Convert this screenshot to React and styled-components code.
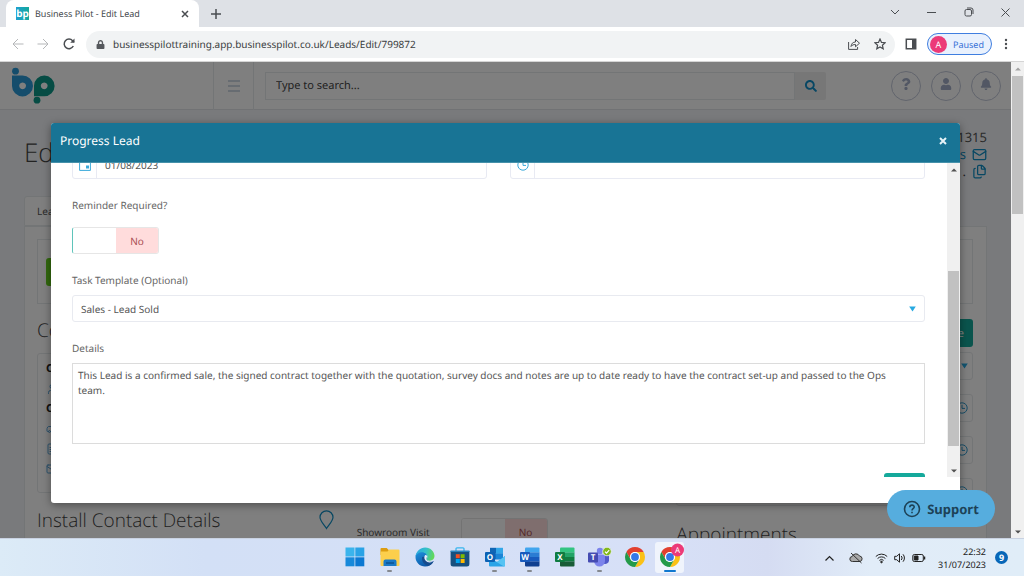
import { useLayoutEffect, useRef, useState } from "react";
import styled, { createGlobalStyle, css } from "styled-components";
import { Files, Mail, User, FileText, Car } from "lucide-react";
import { FaBell, FaLock, FaQuestion, FaSearch, FaUser } from "react-icons/fa";

const GlobalStyle = createGlobalStyle`
  :root {
    --color-teal: #15a99b;
    --color-header: #187495;
    --color-text: #555;
    --color-line: #e7eaec;
    --font-page: "Noto Sans", "Open Sans", sans-serif;
    --font-light: "Open Sans Light", "Open Sans", "Noto Sans", sans-serif;
  }

  * {
    box-sizing: border-box;
    text-rendering: geometricPrecision;
  }

  body {
    margin: 0;
    font-family: var(--font-page);
    font-size: 10px;
    color: var(--color-text);
  }

  button, input, select, textarea {
    font: inherit;
    color: inherit;
  }

  button {
    padding: 0;
    border: none;
    background: none;
  }

  svg {
    display: block;
    flex-shrink: 0;
  }
`;

const Desktop = styled.div`
  display: flex;
  flex-direction: column;
  height: 100vh;
  overflow: hidden;
`;

/* ---------- browser ---------- */

const TabStrip = styled.div`
  display: flex;
  height: 27px;
  padding-left: 6px;
  background-color: #dee1e6;
`;
const Tab = styled.div`
  display: flex;
  align-items: center;
  gap: 6px;
  width: 193px;
  padding: 0 8px 0 10px;
  border-radius: 8px 8px 0 0;
  background-color: #fff;
  font-size: 9px;
  color: #45494d;

  & span {
    flex: 1;
    white-space: nowrap;
  }
`;
const Favicon = styled.b`
  width: 13px;
  height: 13px;
  background: linear-gradient(90deg, #1fa0d0, #14a89c);
  color: #fff;
  font-size: 10px;
  line-height: 12px;
  text-align: center;
`;
const IconButton = styled.button`
  display: grid;
  place-items: center;
  width: ${(props) => props.$width || 25}px;
  height: 27px;
  color: ${(props) => props.$color || "#4a4d51"};
`;
const NewTab = styled(IconButton)`
  margin-left: 4px;
`;
const WindowButtons = styled.div`
  display: flex;
  height: 24px;
  margin-left: auto;

  & button {
    height: 24px;
  }
`;
const Toolbar = styled.div`
  display: flex;
  align-items: center;
  height: 35px;
  padding: 0 5px;
  background-color: #fff;
  border-bottom: 1px solid #d5d5d5;
`;
const AddressBar = styled.div`
  display: flex;
  flex: 1;
  align-items: center;
  height: 27px;
  margin-left: 4px;
  padding: 0 2px 0 10px;
  border-radius: 14px;
  background-color: #f1f3f4;
  color: #55585c;
`;
const Url = styled.input`
  flex: 1;
  min-width: 0;
  padding: 0 0 0 8px;
  border: none;
  outline: none;
  background: none;
  color: #3a3d40;
`;
const Profile = styled.button`
  display: flex;
  align-items: center;
  gap: 6px;
  width: 65px;
  height: 22px;
  padding-left: 2px;
  border: 1px solid #3f7ee0;
  border-radius: 11px;
  background-color: #e9f1fd;
  font-size: 9px;
  color: #3670d6;
`;
const Avatar = styled.span`
  display: grid;
  place-items: center;
  width: 17px;
  height: 17px;
  border-radius: 50%;
  background-color: #ec3a78;
  color: #fff;
`;

const Viewport = styled.div`
  position: relative;
  display: flex;
  flex: 1;
  min-height: 0;
`;

/* ---------- scroll bar ---------- */

const Track = styled.div`
  display: flex;
  flex-direction: column;
  width: 13px;
  padding: 0 1px;
  background-color: #f0f0f0;
`;
const Thumb = styled.div`
  flex: ${(props) => props.$size};
  background-color: #c1c1c1;
`;
const Gap = styled.div`
  flex: ${(props) => props.$size};
`;
const ArrowBox = styled.div`
  display: grid;
  place-items: center;
  height: 13px;
`;

/* ---------- page behind the dialog ---------- */

const Page = styled.div`
  position: relative;
  flex: 1;
  min-width: 0;
  overflow: hidden;
  background-color: #f3f5f9;
`;
const Shade = styled.div`
  position: absolute;
  inset: 0;
  background-color: rgba(0, 0, 0, 0.5);
`;
const PageHeader = styled.header`
  display: flex;
  align-items: center;
  height: 48px;
  padding-right: 10px;
  background-color: #fff;
  border-bottom: 1px solid #e3e5e8;
`;
const LogoLink = styled.a`
  width: 213px;
  padding-left: 11px;
`;
const MenuButton = styled.button`
  display: grid;
  place-items: center;
  width: 41px;
  height: 48px;
  border: solid var(--color-line);
  border-width: 0 1px;
  color: #9fb1c8;
`;
const Search = styled.form`
  display: flex;
  width: 561px;
  height: 28px;
  margin: 0 auto 0 11px;

  & input {
    flex: 1;
    min-width: 0;
    padding: 0 10px;
    border: 1px solid var(--color-line);
    background: none;
    font-size: 11px;
  }

  & input::placeholder {
    color: #444;
    opacity: 1;
  }

  & button {
    display: grid;
    place-items: center;
    width: 31px;
    border-radius: 0 2px 2px 0;
    background-color: #eeeeee;
    color: #108fc8;
  }
`;
const RoundButton = styled.button`
  display: grid;
  place-items: center;
  width: 30px;
  height: 30px;
  margin-left: 10px;
  padding-bottom: 3px;
  border: 1px solid #c3c9da;
  border-radius: 50%;
  color: #a4afc8;
`;
const TitleRow = styled.div`
  display: flex;
  justify-content: space-between;
  height: 86px;
  padding: 19px 24px 0;
`;
const Title = styled.h1`
  margin: 5px 0 0;
  font-family: var(--font-light);
  font-size: 26px;
  font-weight: 300;
  line-height: 36px;
  color: #444;
`;
const LeadMeta = styled.div`
  display: flex;
  flex-direction: column;
  align-items: flex-end;
  line-height: 17px;
  font-size: 13px;

  & > a, & > span {
    display: flex;
    align-items: center;
    gap: 6px;
    height: 17px;
    color: #0f8fc6;
    text-decoration: none;
  }

  & i {
    font-style: normal;
    color: #444;
  }
`;
const LeadTab = styled.button`
  height: 30px;
  margin-left: 24px;
  padding: 0 12px;
  border: 1px solid var(--color-line);
  border-radius: 3px 3px 0 0;
  background-color: #fff;
`;
const Panel = styled.main`
  min-height: 100%;
  margin: 0 24px;
  padding: 12px 13px 0 12px;
  border: 1px solid var(--color-line);
  background-color: #fff;
`;
const ActionBox = styled.div`
  display: flex;
  align-items: center;
  height: 65px;
  padding-left: 8px;
  border: 1px solid var(--color-line);
`;
const GreenButton = styled.button`
  width: 60px;
  height: 28px;
  border-radius: 3px;
  background-color: #65d11d;
`;
const Columns = styled.div`
  display: grid;
  grid-template-columns: 1fr 1fr 1fr;
  gap: 23px;
`;
const Column = styled.div`
  display: flex;
  flex-direction: column;
  gap: ${(props) => props.$gap}px;
  padding-top: ${(props) => props.$top}px;
`;
const SectionTitle = styled.h2`
  display: flex;
  align-items: center;
  justify-content: space-between;
  margin: 0;
  font-family: var(--font-light);
  font-size: 19px;
  font-weight: 300;
  line-height: 28px;
  color: #444;

  & svg {
    color: #0f8fc6;
  }
`;
const ContactBox = styled.div`
  display: flex;
  flex-direction: column;
  gap: 6px;
  height: 140px;
  margin-bottom: 4px;
  padding: 8px;
  border: 1px solid var(--color-line);
  border-radius: 3px;
  line-height: 14px;
  font-size: 11px;
  color: #222;

  & svg {
    margin: 1px 0;
    color: #5aa5da;
  }
`;
const TealButton = styled.button`
  height: 28px;
  padding: 0 9px;
  border-radius: 3px;
  background-color: var(--color-teal);
  font-size: 11px;
  color: #fff;

  ${(props) =>
    props.$wide &&
    css`
      width: 41px;
    `}
`;
const SideField = styled.div`
  display: flex;
  align-items: center;
  justify-content: flex-end;
  height: 28px;
  padding-right: 4px;
  border: 1px solid var(--color-line);
  border-radius: 3px;
  color: #2f9bd0;
`;
const SideStack = styled.div`
  display: flex;
  flex-direction: column;
  align-items: stretch;
  gap: 14px;
`;
const ButtonLine = styled.div`
  display: flex;
  justify-content: flex-end;
`;
const VisitRow = styled.div`
  display: flex;
  align-items: center;
  gap: 31px;
  height: 27px;
  white-space: nowrap;
`;

/* ---------- dialog ---------- */

const Dialog = styled.section`
  position: absolute;
  inset: 61px 51px 35px;
  display: flex;
  flex-direction: column;
  padding-bottom: 26px;
  border-radius: 3px;
  background-color: #fff;
  box-shadow: 0 2px 8px rgba(0, 0, 0, 0.4);
`;
const DialogHeader = styled.header`
  display: flex;
  align-items: center;
  justify-content: space-between;
  height: 40px;
  padding: 0 7px 4px 9px;
  border-bottom: 1px solid #4691aa;
  border-radius: 3px 3px 0 0;
  background-color: var(--color-header);
  color: #fff;

  & h2 {
    margin: 0;
    font-size: 12px;
    font-weight: 400;
  }
`;
const DialogBody = styled.div`
  display: flex;
  flex: 1;
  min-height: 0;
`;
const Scroller = styled.div`
  flex: 1;
  min-width: 0;
  overflow: hidden;
`;
const Form = styled.form`
  display: flex;
  flex-direction: column;
  gap: 17px;
  padding: 0 22px 12px 21px;
`;
const FieldPair = styled.div`
  display: grid;
  grid-template-columns: 1fr 1fr;
  gap: 23px;
`;
const IconField = styled.div`
  display: flex;
  height: 28px;
  border: 1px solid #e8eaf3;
  border-radius: 3px;

  & label {
    display: grid;
    place-items: center;
    width: 24px;
    border-right: 1px solid #e8eaf3;
    color: #3aa9da;
  }

  & input {
    flex: 1;
    min-width: 0;
    padding: 0 8px;
    border: none;
    background: none;
  }
`;
const Field = styled.div`
  display: flex;
  flex-direction: column;
  gap: 6px;

  & > label {
    line-height: 18px;
    color: #666;
  }
`;
const ToggleBox = styled.label`
  display: flex;
  width: 87px;
  height: 27px;
  border: 1px solid #e6e6e6;
  border-left: 1px solid ${(props) => (props.$plain ? "#e6e6e6" : "#5fc4ba")};
  border-radius: 3px;
  overflow: hidden;

  & input {
    width: 43px;
    height: 100%;
    margin: 0;
    appearance: none;
    background-color: #fff;
  }

  & span {
    display: grid;
    flex: 1;
    place-items: center;
    background-color: #ffdcdc;
    color: #a94d52;
  }
`;
const FormToggle = styled(ToggleBox)`
  margin-top: 7px;
`;
const SelectBox = styled.div`
  display: grid;
  align-items: center;

  & select {
    grid-area: 1 / 1;
    height: 27px;
    padding: 0 8px;
    border: 1px solid #e8eaf0;
    border-radius: 3px;
    appearance: none;
    background-color: #fff;
  }

  & svg {
    grid-area: 1 / 1;
    justify-self: end;
    margin-right: 9px;
    pointer-events: none;
  }
`;
const Details = styled.textarea`
  display: block;
  height: 81px;
  padding: 4px 12px 4px 5px;
  border: 1px solid #dcdcdc;
  outline: none;
  resize: none;
  line-height: 15px;
`;
const FormFooter = styled.div`
  display: flex;
  justify-content: flex-end;
  padding-top: 12px;
`;
const Support = styled.button`
  position: absolute;
  right: 29px;
  bottom: 11px;
  display: flex;
  align-items: center;
  justify-content: center;
  gap: 6px;
  width: 108px;
  height: 37px;
  border-radius: 19px;
  background-color: #56adde;
  font-size: 13px;
  font-weight: 700;
  color: #1d4257;
`;

/* ---------- taskbar ---------- */

const Taskbar = styled.footer`
  display: grid;
  grid-template-columns: 1fr auto 1fr;
  align-items: center;
  height: 38px;
  border-top: 1px solid #c9d2e2;
  background: linear-gradient(90deg, #dcebf7 0%, #d3e0f6 20%, #d7e0f7 65%, #d5dcf2 75%, #e1ecf8 85%, #e0edf8 100%);
`;
const Apps = styled.nav`
  display: flex;
  grid-column: 2;
`;
const AppButton = styled.button`
  display: flex;
  flex-direction: column;
  align-items: center;
  justify-content: flex-end;
  gap: 3px;
  width: 29px;
  height: 31px;
  margin: 0 3px;
  border-radius: 3px;

  ${(props) =>
    props.$active &&
    css`
      background-color: #f0f4fc;
    `}
`;
const Indicator = styled.i`
  width: ${(props) => (props.$state == "active" ? 12 : 5)}px;
  height: 2px;
  margin-bottom: 1px;
  border-radius: 1px;
  background-color: ${(props) =>
    props.$state == "active" ? "#0f77d0" : props.$state == "open" ? "#85898f" : "transparent"};
`;
const Tray = styled.div`
  display: flex;
  align-items: center;
  justify-content: flex-end;
  padding-right: 16px;
  color: #222;
`;
const TrayIcons = styled.div`
  display: flex;
  align-items: center;
  gap: 6px;
  margin-right: 12px;
`;
const SyncIcons = styled.div`
  display: flex;
  align-items: center;
  gap: 9px;
  margin-right: 12px;
`;
const Clock = styled.time`
  font-size: 9px;
  line-height: 13px;
  text-align: right;
  color: #222;
`;
const Count = styled.span`
  display: grid;
  place-items: center;
  width: 13px;
  height: 13px;
  margin-left: 9px;
  border-radius: 50%;
  background-color: #0867b8;
  font-size: 9px;
  font-weight: 700;
  color: #fff;
`;

/* ---------- drawings ---------- */

function Line({ d, size = 12, weight = 1, box = 12, children }) {
  return (
    <svg width={size} height={size} viewBox={`0 0 ${box} ${box}`} fill="none" stroke="currentColor" strokeWidth={weight}>
      {d && <path d={d} />}
      {children}
    </svg>
  );
}

function Triangle({ up, color = "#505050", size = 6 }) {
  return (
    <svg width={size} height={size} viewBox="0 0 6 6">
      <path d={up ? "M0 4.5h6L3 1.5z" : "M0 1.5h6L3 4.5z"} fill={color} />
    </svg>
  );
}

function Caret() {
  return (
    <svg width="7" height="6" viewBox="0 0 7 6">
      <path d="M.2.5h6.600L3.500 5.600z" fill="#27a9e1" />
    </svg>
  );
}

function ClockIcon() {
  return (
    <Line size={12}>
      <circle cx="6" cy="6" r="5.2" />
      <path d="M6 2.8V6.4H9" />
    </Line>
  );
}

function CalendarIcon() {
  return (
    <Line size={12}>
      <path d="M.6 1.8h10.8v9.6H.6z" />
      <path d="M.6 3h10.8" strokeWidth="2" />
      <path d="M7 6.500h3v3H7z" fill="currentColor" stroke="none" />
    </Line>
  );
}

function Logo() {
  return (
    <svg width="44" height="38" viewBox="0 0 44 38">
      <circle cx="4.5" cy="4.2" r="3.4" fill="#2b9bd8" />
      <path fillRule="evenodd" fill="#2b9bd8" d="M1 8.400h10.500a10.500 10.500 0 1 1-10.500 10.500zM11.600 15.400a3.400 3.400 0 1 0 .01 0z" />
      <path fillRule="evenodd" fill="#0c9888" d="M23 29.200V18.800a10.300 10.300 0 1 1 10.300 10.400zM33.200 15.400a3.400 3.400 0 1 0 .01 0z" />
      <circle cx="26" cy="33.2" r="3.4" fill="#0c9888" />
    </svg>
  );
}

function MapPinDrop() {
  return (
    <svg width="15" height="20" viewBox="0 0 15 20" fill="none" stroke="currentColor" strokeWidth="1.200">
      <path d="M7.500 18.500C5 14.500 1 11 1 7.300a6.500 6.500 0 0 1 13 0c0 3.700-4 7.200-6.500 11.200z" />
    </svg>
  );
}

function WindowsIcon() {
  return (
    <svg width="20" height="20" viewBox="0 0 20 20">
      <path d="M.5.5h9v9h-9z" fill="#3bb4ec" />
      <path d="M10.3.5h9v9h-9z" fill="#2aa3e6" />
      <path d="M.5 10.3h9v9h-9z" fill="#1789da" />
      <path d="M10.3 10.3h9v9h-9z" fill="#0b78d2" />
    </svg>
  );
}

function FolderIcon() {
  return (
    <svg width="20" height="20" viewBox="0 0 20 20">
      <path d="M.5 2a1 1 0 0 1 1-1h5.2l2 2H18v5H.5z" fill="#dd9d10" />
      <path d="M.5 4.5h7L9 2.6h9.500a1 1 0 0 1 1 1V18a1 1 0 0 1-1 1h-17a1 1 0 0 1-1-1z" fill="#fccf4c" />
      <path d="M3.500 19v-4.500a2 2 0 0 1 2-2h9a2 2 0 0 1 2 2V19z" fill="#1878c6" />
      <path d="M6 16h8" stroke="#0b4f8c" strokeWidth="1.400" />
    </svg>
  );
}

function EdgeIcon() {
  return (
    <svg width="20" height="20" viewBox="0 0 24 24">
      <defs>
        <linearGradient id="edge-top" x1="0" x2="1" y1=".2" y2=".4">
          <stop offset="0" stopColor="#2aa7e0" />
          <stop offset=".55" stopColor="#35c1c9" />
          <stop offset="1" stopColor="#62d957" />
        </linearGradient>
        <linearGradient id="edge-base" x1="0" x2=".6" y1="0" y2="1">
          <stop offset="0" stopColor="#1f93de" />
          <stop offset="1" stopColor="#0c55a5" />
        </linearGradient>
      </defs>
      <path d="M.6 12C.6 7 5 5 9 5.500c4 .5 5.800 3.200 5.600 6-2 3 .4 6.500 3.900 6.500 1.500 0 3-.5 4-1.200C20.700 21 16.800 23.400 12 23.400 5.700 23.400.6 18.300.6 12z" fill="url(#edge-base)" />
      <path d="M8.600 12c-1 5 2.400 9.800 7.900 10.600 2.700-1 4.900-3 6-5.800-5.500 2.700-10.300-.2-9-5.300z" fill="#164c8e" />
      <path d="M12 9.800c1.400-.6 2.700.4 2.600 2-1.200 1.300-1.100 3 .3 4.500 1.500 1.500 4.800 1.900 7.700.6-2.700 2.400-7.700 2.400-10-.6-1.600-2-1.900-4.600-.6-6.500z" fill="#e4eefa" />
      <path d="M.7 11C1.600 5 6.300.6 12.200.6c6.600 0 11.200 5 11.200 10.300 0 3.600-2.600 5.600-5.600 5.600-2.500 0-3.900-1-3.900-2 0-.8 1-1.300 1-3.200 0-2.700-3.200-5.100-7-5.100-3.300 0-5.900 2-7.200 4.800z" fill="url(#edge-top)" />
    </svg>
  );
}

function StoreIcon() {
  return (
    <svg width="20" height="20" viewBox="0 0 20 20">
      <path d="M6 5V1.800A1 1 0 0 1 7 .8h6a1 1 0 0 1 1 1V5" fill="none" stroke="#39b5ee" strokeWidth="1.300" />
      <path d="M.6 4h18.800v13a2.500 2.500 0 0 1-2.500 2.500H3.100A2.500 2.500 0 0 1 .6 17z" fill="#17507f" />
      <path d="M.6 3.500h18.800v1.500H.6z" fill="#2a83bd" />
      <path d="M5.800 7.200h4v4h-4z" fill="#f25022" />
      <path d="M10.600 7.200h4v4h-4z" fill="#7fba00" />
      <path d="M5.800 12h4v4h-4z" fill="#00a4ef" />
      <path d="M10.600 12h4v4h-4z" fill="#ffb900" />
    </svg>
  );
}

function OfficeIcon({ letter, dark, tones }) {
  return (
    <svg width="20" height="20" viewBox="0 0 20 20">
      <path d="M5 1.600a1 1 0 0 1 1-1h12.500a1 1 0 0 1 1 1V5.400H5z" fill={tones[0]} />
      <path d="M5 5.400h14.500V10H5z" fill={tones[1]} />
      <path d="M5 10h14.500v4.600H5z" fill={tones[2]} />
      <path d="M5 14.600h14.500v3.800a1 1 0 0 1-1 1H6a1 1 0 0 1-1-1z" fill={tones[3]} />
      <rect x="0" y="5" width="10" height="10" rx="1" fill={dark} />
      <text x="5" y="12.800" fill="#fff" fontSize="8" fontWeight="700" textAnchor="middle">{letter}</text>
    </svg>
  );
}

function OutlookIcon() {
  return (
    <svg width="20" height="20" viewBox="0 0 20 20">
      <path d="M5 .8h6v6H5z" fill="#1066b5" />
      <path d="M11 .8h7v6h-7z" fill="#33a7e8" />
      <path d="M5 6.500h6v6H5z" fill="#0f6fc5" />
      <path d="M11 6.500h7v6h-7z" fill="#1b85d6" />
      <path d="M4 10l8 5 8-6v9.500a1 1 0 0 1-1 1H5a1 1 0 0 1-1-1z" fill="#2aa4e8" />
      <path d="M20 9v9.500a1 1 0 0 1-1 1L9 13.500l3 1.500z" fill="#56c3f3" />
      <rect x="0" y="5" width="10" height="10" rx="1" fill="#0c62b4" />
      <text x="5" y="12.800" fill="#fff" fontSize="8" fontWeight="700" textAnchor="middle">O</text>
    </svg>
  );
}

function TeamsIcon() {
  return (
    <svg width="24" height="20" viewBox="0 0 24 20">
      <circle cx="12" cy="4" r="3.200" fill="#7b83eb" />
      <path d="M14 8h7v5.500a3.800 3.800 0 0 1-5 3.300z" fill="#5059c9" />
      <path d="M6 7.500h11V14a5.500 5.500 0 0 1-11 0z" fill="#7b83eb" />
      <rect x="0" y="5.500" width="10" height="10" rx="1" fill="#444bb2" />
      <text x="5" y="13.300" fill="#fff" fontSize="8" fontWeight="700" textAnchor="middle">T</text>
      <circle cx="19" cy="4.500" r="4.300" fill="#83b81a" stroke="#eef3fb" strokeWidth=".8" />
      <path d="M17 4.600l1.500 1.500 2.700-2.900" fill="none" stroke="#fff" strokeWidth="1.200" />
    </svg>
  );
}

function ChromeIcon({ badge }) {
  return (
    <svg width="22" height="20" viewBox="1 1 22 20" overflow="visible">
      <path d="M3.340 6A10 10 0 0 1 20.660 6H12a5 5 0 0 0-4.330 7.500z" fill="#e2402f" />
      <path d="M20.660 6A10 10 0 0 1 12 21l4.330-7.500A5 5 0 0 0 12 6z" fill="#fbc116" />
      <path d="M12 21A10 10 0 0 1 3.340 6l4.330 7.500a5 5 0 0 0 8.660 0z" fill="#249a49" />
      <circle cx="12" cy="11" r="5" fill="#fff" />
      <circle cx="12" cy="11" r="3.900" fill="#3478e8" />
      {badge && (
        <>
          <circle cx="19.500" cy="4" r="6.500" fill="#ec3a78" />
          <text x="19.500" y="7" fill="#fff" fontSize="8" textAnchor="middle">A</text>
        </>
      )}
    </svg>
  );
}

const apps = [
  { name: "Start", icon: <WindowsIcon /> },
  { name: "File Explorer", icon: <FolderIcon />, state: "open" },
  { name: "Edge", icon: <EdgeIcon /> },
  { name: "Store", icon: <StoreIcon /> },
  { name: "Outlook", icon: <OutlookIcon />, state: "open" },
  {
    name: "Word",
    icon: <OfficeIcon letter="W" dark="#185abd" tones={["#41a5ee", "#2b7cd3", "#185abd", "#103f91"]} />,
    state: "open",
  },
  {
    name: "Excel",
    icon: <OfficeIcon letter="X" dark="#107c41" tones={["#33c481", "#21a366", "#107c41", "#185c37"]} />,
  },
  { name: "Teams", icon: <TeamsIcon />, state: "open" },
  { name: "Chrome", icon: <ChromeIcon /> },
  { name: "Chrome profile", icon: <ChromeIcon badge />, state: "active" },
];

/* ---------- parts ---------- */

function ScrollBar({ before, thumb, after, topColor }) {
  return (
    <Track>
      <ArrowBox>
        <Triangle up color={topColor} />
      </ArrowBox>
      <Gap $size={before} />
      <Thumb $size={thumb} />
      <Gap $size={after} />
      <ArrowBox>
        <Triangle />
      </ArrowBox>
    </Track>
  );
}

function BrowserBar() {
  return (
    <>
      <TabStrip>
        <Tab>
          <Favicon>bp</Favicon>
          <span>Business Pilot - Edit Lead</span>
          <IconButton $width={12} aria-label="Close tab">
            <Line size={8} box={8} weight={1.5} d="M1 1l6 6M7 1l-6 6" />
          </IconButton>
        </Tab>
        <NewTab aria-label="New tab">
          <Line size={10} box={10} weight={1.5} d="M5 0v10M0 5h10" />
        </NewTab>
        <WindowButtons>
          <IconButton $width={37} aria-label="Search tabs">
            <Line size={10} box={10} d="M1 3l4 4 4-4" />
          </IconButton>
          <IconButton $width={37} aria-label="Minimise">
            <Line size={9} box={9} d="M0 4.500h9" />
          </IconButton>
          <IconButton $width={37} aria-label="Restore">
            <Line size={10} box={10}>
              <rect x="1" y="2.500" width="6.500" height="6.500" rx="1.500" />
              <path d="M3 1h4a2 2 0 0 1 2 2v4" />
            </Line>
          </IconButton>
          <IconButton $width={37} aria-label="Close">
            <Line size={9} box={9} d="M.5.5l8 8M8.500.5l-8 8" />
          </IconButton>
        </WindowButtons>
      </TabStrip>
      <Toolbar>
        <IconButton $color="#b5b7b9" aria-label="Back">
          <Line size={12} d="M11.500 6H1M6 1L1 6l5 5" />
        </IconButton>
        <IconButton $color="#b5b7b9" aria-label="Forward">
          <Line size={12} d="M.5 6H11M6 1l5 5-5 5" />
        </IconButton>
        <IconButton $width={27} aria-label="Reload">
          <Line size={12} weight={1.5}>
            <path d="M10.300 8A4.800 4.800 0 1 1 9.600 2.700L11 4" />
            <path d="M11.500.5v4.300H7.200z" fill="currentColor" stroke="none" />
          </Line>
        </IconButton>
        <AddressBar>
          <FaLock size={9} />
          <Url aria-label="Address" defaultValue="businesspilottraining.app.businesspilot.co.uk/Leads/Edit/799872" />
          <IconButton aria-label="Share">
            <Line size={12}>
              <path d="M.6 4v7.400h9V9" />
              <path d="M3 8.500C3.300 5.500 5 4 7.500 4V1.500l4 3.700-4 3.600V6.500C5.500 6.500 4 7 3 8.500z" />
            </Line>
          </IconButton>
          <IconButton $width={27} aria-label="Bookmark">
            <Line size={12} weight={1.2} d="M6 1l1.500 3.400 3.700.3-2.800 2.500.8 3.600L6 8.900l-3.200 1.900.8-3.600L.8 4.700l3.700-.3z" />
          </IconButton>
        </AddressBar>
        <IconButton $width={32} aria-label="Side panel">
          <Line size={12}>
            <path d="M1.300 1.300h9.400v9.400H1.300z" strokeWidth="1.500" />
            <path d="M7 1h4v10H7z" fill="currentColor" stroke="none" />
          </Line>
        </IconButton>
        <Profile>
          <Avatar>A</Avatar>
          Paused
        </Profile>
        <IconButton $width={27} aria-label="Menu">
          <svg width="4" height="12" viewBox="0 0 4 12" fill="currentColor">
            <circle cx="2" cy="2" r="1.200" />
            <circle cx="2" cy="6" r="1.200" />
            <circle cx="2" cy="10" r="1.200" />
          </svg>
        </IconButton>
      </Toolbar>
    </>
  );
}

function Toggle({ as: Box = ToggleBox, id, plain }) {
  const [on, setOn] = useState(false);

  return (
    <Box $plain={plain}>
      <input id={id} type="checkbox" checked={on} onChange={() => setOn(!on)} />
      <span>{on ? "Yes" : "No"}</span>
    </Box>
  );
}

function LeadPage() {
  return (
    <>
      <PageHeader>
        <LogoLink href="#home" aria-label="Business Pilot">
          <Logo />
        </LogoLink>
        <MenuButton aria-label="Menu">
          <Line size={12} d="M0 1h12M0 6h12M0 11h12" />
        </MenuButton>
        <Search>
          <input aria-label="Search" placeholder="Type to search..." />
          <button type="button" aria-label="Search">
            <FaSearch size={12} />
          </button>
        </Search>
        <RoundButton aria-label="Help">
          <FaQuestion size={12} />
        </RoundButton>
        <RoundButton aria-label="Account">
          <FaUser size={12} />
        </RoundButton>
        <RoundButton aria-label="Notifications">
          <FaBell size={12} />
        </RoundButton>
      </PageHeader>
      <TitleRow>
        <Title>Edit Lead</Title>
        <LeadMeta>
          <div>1315</div>
          <a href="#mail">
            gs
            <Mail size={15} strokeWidth={2} />
          </a>
          <span>
            <i>.</i>
            <Files size={15} strokeWidth={2} />
          </span>
        </LeadMeta>
      </TitleRow>
      <LeadTab>Lead</LeadTab>
      <Panel>
        <ActionBox>
          <GreenButton aria-label="Progress" />
        </ActionBox>
        <Columns>
          <Column $top={12} $gap={9}>
            <SectionTitle>Contact Details</SectionTitle>
            <ContactBox>
              <b>C</b>
              <User size={12} />
              <b>C</b>
              <Car size={12} />
              <FileText size={12} />
              <Mail size={12} />
            </ContactBox>
            <SectionTitle>
              Install Contact Details
              <MapPinDrop />
            </SectionTitle>
          </Column>
          <Column $top={214}>
            <VisitRow>
              <label htmlFor="visit">Showroom Visit</label>
              <Toggle id="visit" plain />
            </VisitRow>
          </Column>
          <Column $top={15} $gap={5}>
            <ButtonLine>
              <TealButton>Save</TealButton>
            </ButtonLine>
            <SideStack>
              <SideField>
                <Caret />
              </SideField>
              <SideField>
                <ClockIcon />
              </SideField>
              <SideField>
                <ClockIcon />
              </SideField>
              <SideField>
                <ClockIcon />
              </SideField>
              <SectionTitle>Appointments</SectionTitle>
            </SideStack>
          </Column>
        </Columns>
      </Panel>
    </>
  );
}

function ProgressLead() {
  const scroller = useRef(null);

  useLayoutEffect(() => {
    scroller.current.scrollTop = 12;
  }, []);

  return (
    <Dialog role="dialog" aria-labelledby="progress-title">
      <DialogHeader>
        <h2 id="progress-title">Progress Lead</h2>
        <IconButton $width={20} $color="#e6f3f7" aria-label="Close">
          <Line size={8} box={8} weight={2} d="M1 1l6 6M7 1l-6 6" />
        </IconButton>
      </DialogHeader>
      <DialogBody>
        <Scroller ref={scroller}>
          <Form>
            <FieldPair>
              <IconField>
                <label htmlFor="date" aria-label="Date">
                  <CalendarIcon />
                </label>
                <input id="date" defaultValue="01/08/2023" />
              </IconField>
              <IconField>
                <label htmlFor="time" aria-label="Time">
                  <ClockIcon />
                </label>
                <input id="time" />
              </IconField>
            </FieldPair>
            <Field>
              <label htmlFor="reminder">Reminder Required?</label>
              <Toggle as={FormToggle} id="reminder" />
            </Field>
            <Field>
              <label htmlFor="template">Task Template (Optional)</label>
              <SelectBox>
                <select id="template">
                  <option>Sales - Lead Sold</option>
                </select>
                <Caret />
              </SelectBox>
            </Field>
            <Field>
              <label htmlFor="details">Details</label>
              <Details
                id="details"
                defaultValue="This Lead is a confirmed sale, the signed contract together with the quotation, survey docs and notes are up to date ready to have the contract set-up and passed to the Ops team."
              />
            </Field>
            <FormFooter>
              <TealButton $wide type="button" aria-label="Save" />
            </FormFooter>
          </Form>
        </Scroller>
        <ScrollBar before={95} thumb={175} after={18} />
      </DialogBody>
    </Dialog>
  );
}

function WindowsTaskbar() {
  return (
    <Taskbar>
      <Apps>
        {apps.map((app) => (
          <AppButton key={app.name} aria-label={app.name} $active={app.state == "active"}>
            {app.icon}
            <Indicator $state={app.state} />
          </AppButton>
        ))}
      </Apps>
      <Tray>
        <SyncIcons>
          <Line size={20} box={20} weight={1.2} d="M5.500 12.500l4-4 4 4" />
          <svg width="14" height="12" viewBox="0 0 14 12" stroke="#333" fill="#aaa">
            <path d="M3.500 9.500a2.500 2.500 0 0 1-.3-5A4 4 0 0 1 10.500 4a2.800 2.800 0 0 1 .5 5.500z" />
            <path d="M2 1l10.500 10" />
          </svg>
        </SyncIcons>
        <TrayIcons>
          <svg width="13" height="12" viewBox="0 0 13 12" fill="none" stroke="currentColor">
            <path d="M.8 4.500a8 8 0 0 1 11.400 0M2.600 6.500a5.500 5.500 0 0 1 7.800 0M4.400 8.400a3 3 0 0 1 4.200 0" />
            <circle cx="6.500" cy="10" r=".8" fill="currentColor" />
          </svg>
          <svg width="12" height="12" viewBox="0 0 12 12" fill="none" stroke="currentColor">
            <path d="M.7 4.300h2L5.500 1.800v8.400L2.700 7.700h-2z" />
            <path d="M7.300 4a3 3 0 0 1 0 4M9 2.300a5.500 5.500 0 0 1 0 7.400" />
          </svg>
          <svg width="14" height="12" viewBox="0 0 14 12" fill="none" stroke="currentColor">
            <rect x=".8" y="2.500" width="10.500" height="7" rx="1.500" />
            <path d="M2.300 4h3.700v4H2.300z" fill="currentColor" />
            <path d="M12.500 4.500v3" strokeWidth="1.500" />
          </svg>
        </TrayIcons>
        <Clock>
          22:32
          <br />
          31/07/2023
        </Clock>
        <Count>9</Count>
      </Tray>
    </Taskbar>
  );
}

function App() {
  return (
    <Desktop>
      <GlobalStyle />
      <BrowserBar />
      <Viewport>
        <Page>
          <LeadPage />
          <Shade />
          <ProgressLead />
        </Page>
        <ScrollBar before={1} thumb={138} after={312} topColor="#a3a3a3" />
        <Support>
          <Line size={18} box={18} weight={1.6}>
            <circle cx="9" cy="9" r="7.500" />
            <path d="M6.800 7.300c0-3 4.500-2.800 4.400-.2 0 1.500-2.200 1.700-2.200 3.300M9 11.800v1.500" />
          </Line>
          Support
        </Support>
      </Viewport>
      <WindowsTaskbar />
    </Desktop>
  );
}

export default App;
